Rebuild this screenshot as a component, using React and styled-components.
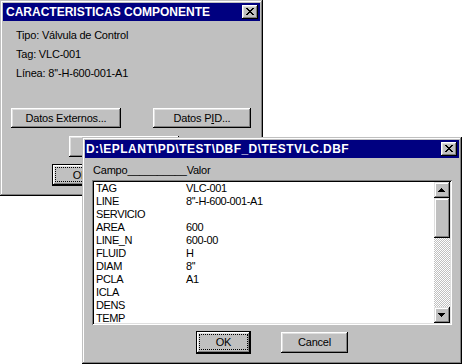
import React from 'react';
import styled, { createGlobalStyle, css } from 'styled-components';

const GlobalStyle = createGlobalStyle`
  html, body { margin: 0; padding: 0; background: #fff; }
  body { width: 462px; height: 364px; overflow: hidden; font-family: "Liberation Sans", Arial, sans-serif; }
`;

const raised = css`
  box-shadow: inset -1px -1px #000, inset 1px 1px #fff, inset -2px -2px #808080, inset 2px 2px #dfdfdf;
`;

const Desktop = styled.div`
  position: relative;
  width: 462px;
  height: 364px;
  overflow: hidden;
  background: #fff;
`;

const Window = styled.div`
  position: absolute;
  left: ${(p) => p.$x}px;
  top: ${(p) => p.$y}px;
  width: ${(p) => p.$w}px;
  height: ${(p) => p.$h}px;
  box-sizing: border-box;
  padding: 3px;
  background: #c0c0c0;
  box-shadow: inset -1px -1px #000, inset 1px 1px #c0c0c0, inset -2px -2px #808080, inset 2px 2px #fff;
  display: flex;
  flex-direction: column;
  font-family: "Liberation Sans", Arial, sans-serif;
  font-size: 11px;
  color: #000;
`;

const TitleBar = styled.div`
  flex: none;
  height: 18px;
  background: #000080;
  color: #fff;
  display: flex;
  align-items: center;
  justify-content: space-between;
  padding: 0 2px 0 ${(p) => p.$pl}px;
`;

const Title = styled.span`
  font-weight: 700;
  font-size: 12px;
  letter-spacing: ${(p) => p.$ls || 0}px;
  white-space: nowrap;
`;

const CloseBox = styled.div`
  width: 16px;
  height: 14px;
  box-sizing: border-box;
  background: #c0c0c0;
  ${raised};
  display: flex;
  align-items: center;
  justify-content: center;
  padding: 0 1px 1px 0;
`;

const Body = styled.div`
  flex: 1;
  display: flex;
  flex-direction: column;
  padding: ${(p) => p.$pad};
`;

const InfoList = styled.div`
  padding-left: 5px;
  line-height: 19px;
  letter-spacing: -0.2px;
`;

const InfoLine = styled.div`
  white-space: nowrap;
`;

const ButtonRow = styled.div`
  display: flex;
  align-items: center;
  gap: ${(p) => p.$gap || 0}px;
  margin-top: ${(p) => p.$mt}px;
  margin-left: ${(p) => p.$ml || 0}px;
  justify-content: ${(p) => (p.$center ? 'center' : 'flex-start')};
`;

const Button = styled.div`
  position: relative;
  flex: none;
  box-sizing: border-box;
  width: ${(p) => p.$w}px;
  height: ${(p) => p.$h}px;
  background: #c0c0c0;
  display: flex;
  align-items: center;
  justify-content: center;
  font-size: 11px;
  letter-spacing: -0.2px;
  white-space: nowrap;
  padding-bottom: 1px;
  ${raised};
  ${(p) =>
    p.$default &&
    css`
      box-shadow: inset 0 0 0 1px #000, inset -2px -2px #000, inset 2px 2px #fff,
        inset -3px -3px #808080, inset 3px 3px #dfdfdf;
    `}
  u { text-decoration: underline; text-underline-offset: 1px; }
`;

const FocusRing = styled.span`
  position: absolute;
  inset: 3px 3px 4px 3px;
  border: 1px dotted #000;
  pointer-events: none;
`;

const ColumnsHeader = styled.div`
  height: 14px;
  line-height: 14px;
  padding-left: 1px;
  letter-spacing: -0.2px;
  white-space: nowrap;
`;

const ListBox = styled.div`
  margin-top: 3px;
  width: 360px;
  height: 145px;
  box-sizing: border-box;
  padding: 2px;
  background: #fff;
  box-shadow: inset 1px 1px #808080, inset -1px -1px #fff, inset 2px 2px #000, inset -2px -2px #dfdfdf;
  display: flex;
`;

const Rows = styled.div`
  flex: 1;
  overflow: hidden;
  padding-left: 2px;
`;

const Row = styled.div`
  display: grid;
  grid-template-columns: 90px 1fr;
  height: 13px;
  line-height: 13px;
  letter-spacing: -0.4px;
  white-space: nowrap;
`;

const ScrollBar = styled.div`
  flex: none;
  width: 16px;
  display: flex;
  flex-direction: column;
`;

const ScrollButton = styled.div`
  flex: none;
  height: 16px;
  box-sizing: border-box;
  background: #c0c0c0;
  box-shadow: inset -1px -1px #000, inset 1px 1px #dfdfdf, inset -2px -2px #808080, inset 2px 2px #fff;
  display: flex;
  align-items: center;
  justify-content: center;
  padding: 0 1px 1px 0;
`;

const Thumb = styled.div`
  flex: none;
  height: 40px;
  background: #c0c0c0;
  box-shadow: inset -1px -1px #000, inset 1px 1px #dfdfdf, inset -2px -2px #808080, inset 2px 2px #fff;
`;

const Track = styled.div`
  flex: 1;
  background: repeating-conic-gradient(#c0c0c0 0% 25%, #fff 0% 50%) 0 0 / 2px 2px;
`;

const CloseGlyph = () => (
  <svg width="8" height="7" viewBox="0 0 8 7" shapeRendering="crispEdges">
    <path
      d="M0 0h2v1H0zM6 0h2v1H6zM1 1h2v1H1zM5 1h2v1H5zM2 2h4v1H2zM3 3h2v1H3zM2 4h4v1H2zM1 5h2v1H1zM5 5h2v1H5zM0 6h2v1H0zM6 6h2v1H6z"
      fill="#000"
    />
  </svg>
);

const Arrow = ({ down }) => (
  <svg width="7" height="4" viewBox="0 0 7 4" shapeRendering="crispEdges">
    <path
      d={
        down
          ? 'M0 0h7v1H0zM1 1h5v1H1zM2 2h3v1H2zM3 3h1v1H3z'
          : 'M3 0h1v1H3zM2 1h3v1H2zM1 2h5v1H1zM0 3h7v1H0z'
      }
      fill="#000"
    />
  </svg>
);

const fields = [
  ['TAG', 'VLC-001'],
  ['LINE', "8''-H-600-001-A1"],
  ['SERVICIO', ''],
  ['AREA', '600'],
  ['LINE_N', '600-00'],
  ['FLUID', 'H'],
  ['DIAM', "8''"],
  ['PCLA', 'A1'],
  ['ICLA', ''],
  ['DENS', ''],
  ['TEMP', ''],
];

export default function App() {
  return (
    <>
      <GlobalStyle />
      <Desktop>
        <Window $x={0} $y={0} $w={263} $h={196}>
          <TitleBar $pl={3}>
            <Title>CARACTERISTICAS COMPONENTE</Title>
            <CloseBox>
              <CloseGlyph />
            </CloseBox>
          </TitleBar>
          <Body $pad="5px 0 0 8px">
            <InfoList>
              <InfoLine>Tipo: Válvula de Control</InfoLine>
              <InfoLine>Tag: VLC-001</InfoLine>
              <InfoLine>Línea: 8''-H-600-001-A1</InfoLine>
            </InfoList>
            <ButtonRow $mt={25} $gap={32}>
              <Button $w={110} $h={20}>Datos Externos...</Button>
              <Button $w={98} $h={20}>
                Datos P<u>I</u>D...
              </Button>
            </ButtonRow>
            <ButtonRow $mt={8} $ml={58}>
              <Button $w={110} $h={21} />
            </ButtonRow>
            <ButtonRow $mt={7} $ml={41}>
              <Button $w={57} $h={22} $default>
                OK
                <FocusRing />
              </Button>
            </ButtonRow>
          </Body>
        </Window>

        <Window $x={82} $y={137} $w={380} $h={227}>
          <TitleBar $pl={1}>
            <Title $ls={0.45}>D:\EPLANT\PD\TEST\DBF_D\TESTVLC.DBF</Title>
            <CloseBox>
              <CloseGlyph />
            </CloseBox>
          </TitleBar>
          <Body $pad="5px 0 0 7px">
            <ColumnsHeader>Campo__________Valor</ColumnsHeader>
            <ListBox>
              <Rows>
                {fields.map(([k, v]) => (
                  <Row key={k}>
                    <span>{k}</span>
                    <span>{v}</span>
                  </Row>
                ))}
              </Rows>
              <ScrollBar>
                <ScrollButton>
                  <Arrow />
                </ScrollButton>
                <Thumb />
                <Track />
                <ScrollButton>
                  <Arrow down />
                </ScrollButton>
              </ScrollBar>
            </ListBox>
            <ButtonRow $mt={6} $gap={30} $center $ml={-7}>
              <Button $w={55} $h={23} $default>
                OK
                <FocusRing />
              </Button>
              <Button $w={67} $h={21}>Cancel</Button>
            </ButtonRow>
          </Body>
        </Window>
      </Desktop>
    </>
  );
}
